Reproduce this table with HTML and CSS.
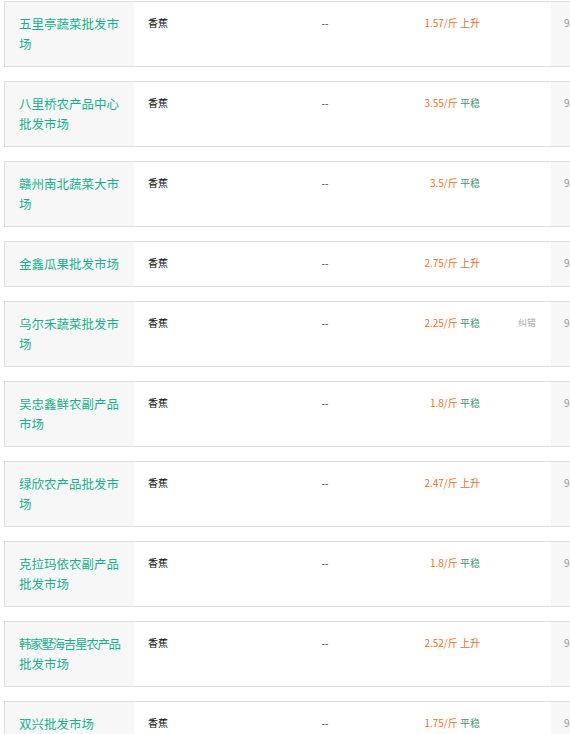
FILE: index.html
```html
<!DOCTYPE html>
<html lang="zh-CN">
<head>
<meta charset="utf-8">
<title>香蕉价格</title>
<link rel="stylesheet" href="styles.css">
</head>
<body>
<div class="list">
  <div class="row">
    <div class="name">五里亭蔬菜批发市场</div>
    <div class="variety">香蕉</div>
    <div class="dash">--</div>
    <div class="price"><span class="num">1.57/斤</span> <span class="up">上升</span></div>
    <div class="fix"></div>
    <div class="date">9月12日</div>
  </div>
  <div class="row">
    <div class="name">八里桥农产品中心批发市场</div>
    <div class="variety">香蕉</div>
    <div class="dash">--</div>
    <div class="price"><span class="num">3.55/斤</span> <span class="flat">平稳</span></div>
    <div class="fix"></div>
    <div class="date">9月12日</div>
  </div>
  <div class="row">
    <div class="name">赣州南北蔬菜大市场</div>
    <div class="variety">香蕉</div>
    <div class="dash">--</div>
    <div class="price"><span class="num">3.5/斤</span> <span class="flat">平稳</span></div>
    <div class="fix"></div>
    <div class="date">9月12日</div>
  </div>
  <div class="row">
    <div class="name">金鑫瓜果批发市场</div>
    <div class="variety">香蕉</div>
    <div class="dash">--</div>
    <div class="price"><span class="num">2.75/斤</span> <span class="up">上升</span></div>
    <div class="fix"></div>
    <div class="date">9月12日</div>
  </div>
  <div class="row">
    <div class="name">乌尔禾蔬菜批发市场</div>
    <div class="variety">香蕉</div>
    <div class="dash">--</div>
    <div class="price"><span class="num">2.25/斤</span> <span class="flat">平稳</span></div>
    <div class="fix">纠错</div>
    <div class="date">9月12日</div>
  </div>
  <div class="row">
    <div class="name">吴忠鑫鲜农副产品市场</div>
    <div class="variety">香蕉</div>
    <div class="dash">--</div>
    <div class="price"><span class="num">1.8/斤</span> <span class="flat">平稳</span></div>
    <div class="fix"></div>
    <div class="date">9月12日</div>
  </div>
  <div class="row">
    <div class="name">绿欣农产品批发市场</div>
    <div class="variety">香蕉</div>
    <div class="dash">--</div>
    <div class="price"><span class="num">2.47/斤</span> <span class="up">上升</span></div>
    <div class="fix"></div>
    <div class="date">9月12日</div>
  </div>
  <div class="row">
    <div class="name">克拉玛依农副产品批发市场</div>
    <div class="variety">香蕉</div>
    <div class="dash">--</div>
    <div class="price"><span class="num">1.8/斤</span> <span class="flat">平稳</span></div>
    <div class="fix"></div>
    <div class="date">9月12日</div>
  </div>
  <div class="row">
    <div class="name"><span class="tight">韩家墅海吉星农产品</span><br>批发市场</div>
    <div class="variety">香蕉</div>
    <div class="dash">--</div>
    <div class="price"><span class="num">2.52/斤</span> <span class="up">上升</span></div>
    <div class="fix"></div>
    <div class="date">9月12日</div>
  </div>
  <div class="row">
    <div class="name">双兴批发市场</div>
    <div class="variety">香蕉</div>
    <div class="dash">--</div>
    <div class="price"><span class="num">1.75/斤</span> <span class="flat">平稳</span></div>
    <div class="fix"></div>
    <div class="date">9月12日</div>
  </div>
</div>
</body>
</html>
```

FILE: styles.css
```css
html, body {
  margin: 0;
  padding: 0;
  overflow: hidden;
  background: #fff;
}
body {
  font-family: "Noto Sans CJK SC", "Noto Sans", sans-serif;
  width: 570px;
  height: 734px;
}
.list {
  display: flex;
  flex-direction: column;
  gap: 14px;
  padding: 1px 0 0 4px;
  width: 700px;
}
.row {
  display: flex;
  border: 1px solid #dedede;
  width: 680px;
}
.name {
  width: 101px;
  flex: none;
  padding: 12px 14px;
  background: #f7f7f7;
  color: #10b489;
  font-size: 12.5px;
  line-height: 20px;
}
.tight {
  white-space: nowrap;
  letter-spacing: -1.3px;
}
.variety, .dash, .price, .fix, .date {
  flex: none;
  font-size: 10px;
  line-height: 20px;
  padding-top: 11px;
}
.variety {
  width: 152px;
  padding-left: 14px;
  color: #111;
}
.dash {
  width: 50px;
  text-align: center;
  color: #333;
}
.price {
  width: 130px;
  text-align: right;
}
.num { color: #ff6a10; }
.up { color: #eb6a30; }
.flat { color: #3a9c74; }
.fix {
  width: 33px;
  padding-left: 38px;
  font-size: 9px;
  color: #aaa;
}
.date {
  width: 115px;
  padding-left: 13px;
  background: #f7f7f7;
  color: #999;
}
```
